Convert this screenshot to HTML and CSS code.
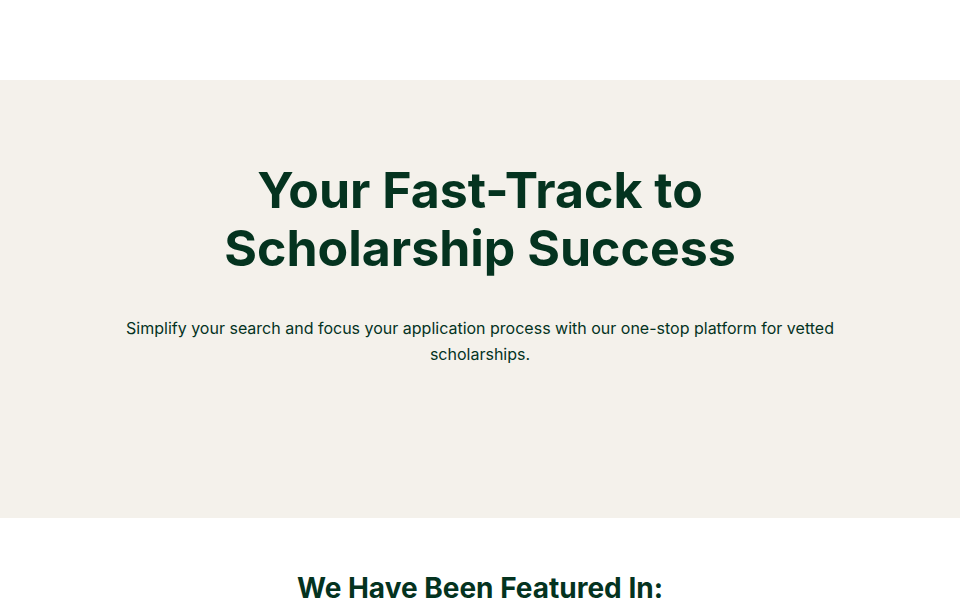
FILE: index.html
```html
<!DOCTYPE html>
<html lang="en">
<head>
<meta charset="utf-8">
<title>Scholarships</title>
<link rel="stylesheet" href="styles.css">
</head>
<body>
<header class="site-header"></header>
<section class="hero">
  <h1 class="hero-title">Your Fast-Track to<br>Scholarship Success</h1>
  <p class="hero-text">Simplify your search and focus your application process with our one-stop platform for vetted scholarships.</p>
</section>
<section class="featured">
  <h2 class="featured-title">We Have Been Featured In:</h2>
</section>
</body>
</html>
```
FILE: styles.css
```css
* { box-sizing: border-box; }
html, body { margin: 0; padding: 0; }
body {
  font-family: Inter, "Noto Sans", sans-serif;
  color: #04331f;
  background: #fff;
  overflow: hidden;
}
.site-header { height: 80px; background: #fff; }
.hero {
  height: 438px;
  background: #f4f1eb;
  padding-top: 81px;
  display: flex;
  flex-direction: column;
  align-items: center;
  text-align: center;
}
.hero-title {
  margin: 0;
  font-size: 50px;
  line-height: 58px;
  font-weight: 700;
  letter-spacing: 0;
}
.hero-text {
  margin: 38px 0 0;
  max-width: 724px;
  font-size: 16px;
  line-height: 26px;
  font-weight: 400;
}
.featured {
  padding-top: 53px;
  text-align: center;
}
.featured-title {
  margin: 0;
  font-size: 28px;
  line-height: 34px;
  font-weight: 700;
}
```
